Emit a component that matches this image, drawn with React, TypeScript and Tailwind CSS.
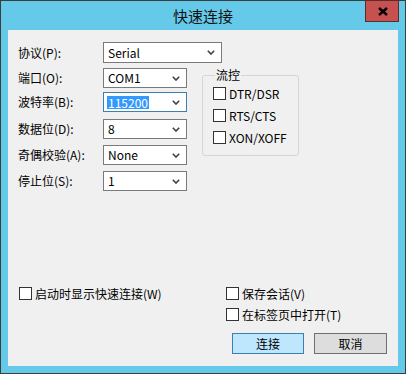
import { ReactNode } from 'react'

const font = { fontFamily: '"Noto Sans CJK SC", "Noto Sans", sans-serif' }

function Chevron() {
  return (
    <svg width="8" height="5" viewBox="0 0 8 5" className="shrink-0">
      <path d="M0.8 0.8 L4 4 L7.2 0.8" fill="none" stroke="#404040" strokeWidth="1.6" />
    </svg>
  )
}

interface ComboProps {
  value: string
  width: string
  height?: string
  focused?: boolean
}

function Combo({ value, width, height = 'h-[20px]', focused }: ComboProps) {
  return (
    <div
      className={`${width} ${height} flex items-center justify-between bg-white border pl-[3px] pr-[6px] ${
        focused ? 'border-[#3c7fb1]' : 'border-[#7a7a7a]'
      }`}
    >
      {focused ? (
        <span className="bg-[#3399ff] text-white leading-[13px] px-[1px]">{value}</span>
      ) : (
        <span className="px-[1px] leading-[14px]">{value}</span>
      )}
      <Chevron />
    </div>
  )
}

function Row({ label, children, className = '' }: { label: string; children: ReactNode; className?: string }) {
  return (
    <div className={`flex items-center pl-[10px] ${className}`}>
      <span className="w-[85px] leading-[14px]">{label}</span>
      {children}
    </div>
  )
}

function Check({ label }: { label: string }) {
  return (
    <div className="flex items-center h-[13px]">
      <span className="w-[13px] h-[13px] border border-[#333] bg-white shrink-0" />
      <span className="ml-[3px] leading-[14px] whitespace-nowrap">{label}</span>
    </div>
  )
}

export default function App() {
  return (
    <div style={font} className="w-[406px] h-[374px] text-[12px] text-black">
      <div className="relative w-full h-full bg-[#65c9ea] border border-[#3d3d3d] flex flex-col">
        {/* Title bar */}
        <div className="h-[29px] flex items-center justify-center">
          <span className="text-[15px] leading-[18px] text-[#111] mt-[1px]">快速连接</span>
        </div>
        <button className="absolute top-[-1px] right-[6px] w-[34px] h-[22px] bg-[#c75050] border border-[#5a2d2d] flex items-center justify-center">
          <svg width="10" height="9" viewBox="0 0 10 9" className="ml-[1px]">
            <path d="M1 1 L9 8 M9 1 L1 8" stroke="#000" strokeWidth="2.4" />
          </svg>
        </button>

        {/* Content */}
        <div className="mx-[7px] h-[336px] bg-[#f0f0f0] flex flex-col pt-[12px] pb-[12px]">
          <Row label="协议(P):">
            <Combo value="Serial" width="w-[119px]" height="h-[21px]" />
          </Row>

          <div className="flex mt-[5px]">
            <div className="flex flex-col w-[179px]">
              <Row label="端口(O):">
                <Combo value="COM1" width="w-[84px]" />
              </Row>
              <Row label="波特率(B):" className="mt-[4px]">
                <Combo value="115200" width="w-[84px]" focused />
              </Row>
              <Row label="数据位(D):" className="mt-[7px]">
                <Combo value="8" width="w-[84px]" />
              </Row>
              <Row label="奇偶校验(A):" className="mt-[6px]">
                <Combo value="None" width="w-[84px]" />
              </Row>
              <Row label="停止位(S):" className="mt-[6px]">
                <Combo value="1" width="w-[84px]" />
              </Row>
            </div>

            <fieldset className="ml-[15px] w-[97px] h-[88px] min-w-0 border border-[#d5d5d5] rounded-[3px] self-start">
              <legend className="ml-[12px] px-[1px] leading-[14px]">流控</legend>
              <div className="flex flex-col gap-[9px] pl-[10px] mt-[5px]">
                <Check label="DTR/DSR" />
                <Check label="RTS/CTS" />
                <Check label="XON/XOFF" />
              </div>
            </fieldset>
          </div>

          {/* Bottom options */}
          <div className="mt-auto flex flex-col">
            <div className="flex">
              <div className="w-[218px] pl-[11px]">
                <Check label="启动时显示快速连接(W)" />
              </div>
              <Check label="保存会话(V)" />
            </div>
            <div className="flex mt-[8px] pl-[218px]">
              <Check label="在标签页中打开(T)" />
            </div>
            <div className="flex justify-end gap-[10px] pr-[11px] mt-[12px]">
              <button className="w-[72px] h-[21px] bg-[#bee6fd] border border-[#3c7fb1] leading-[14px]">连接</button>
              <button className="w-[73px] h-[21px] bg-[#dddddd] border border-[#707070] leading-[14px]">取消</button>
            </div>
          </div>
        </div>
      </div>
    </div>
  )
}
